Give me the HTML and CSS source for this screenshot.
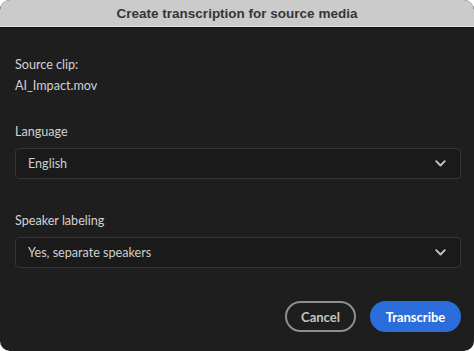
FILE: index.html
```html
<!DOCTYPE html>
<html>
<head>
<meta charset="utf-8">
<link rel="stylesheet" href="styles.css">
</head>
<body>
<div class="window">
  <div class="titlebar">Create transcription for source media</div>
  <div class="content">
    <div class="clip">
      <div class="line">Source clip:</div>
      <div class="line">AI_Impact.mov</div>
    </div>
    <div class="field">
      <div class="label">Language</div>
      <div class="select">
        <span class="value">English</span>
        <svg class="chev" width="11" height="7" viewBox="0 0 11 7"><path d="M1.2 1.2 L5.5 5.5 L9.8 1.2" fill="none" stroke="#c4c4c4" stroke-width="1.9" stroke-linecap="round" stroke-linejoin="round"/></svg>
      </div>
    </div>
    <div class="field second">
      <div class="label">Speaker labeling</div>
      <div class="select">
        <span class="value">Yes, separate speakers</span>
        <svg class="chev" width="11" height="7" viewBox="0 0 11 7"><path d="M1.2 1.2 L5.5 5.5 L9.8 1.2" fill="none" stroke="#c4c4c4" stroke-width="1.9" stroke-linecap="round" stroke-linejoin="round"/></svg>
      </div>
    </div>
    <div class="actions">
      <button class="btn cancel">Cancel</button>
      <button class="btn primary">Transcribe</button>
    </div>
  </div>
</div>
</body>
</html>
```
FILE: styles.css
```css
html, body {
  margin: 0;
  padding: 0;
  background: #ffffff;
}
.window {
  width: 474px;
  height: 351px;
  border-radius: 10px;
  overflow: hidden;
  background: #1e1e1e;
  display: flex;
  flex-direction: column;
}
.titlebar {
  height: 26px;
  background: #cbcbcb;
  border-bottom: 1px solid #e2e2e2;
  box-shadow: 0 1px 0 #111;
  color: #363636;
  font-family: "Liberation Sans", Arial, sans-serif;
  font-weight: bold;
  font-size: 13.5px;
  line-height: 27px;
  text-align: center;
}
.content {
  padding: 27px 13px 0 15px;
  font-family: Lato, "Open Sans", sans-serif;
  font-size: 12.6px;
  color: #d2d2d2;
}
.line {
  line-height: 21px;
}
.clip {
  margin-bottom: 25px;
}
.label {
  line-height: 21px;
  margin-bottom: 6px;
}
.field.second {
  margin-top: 31px;
}
.select {
  height: 29px;
  border: 1px solid #353535;
  border-radius: 4px;
  background: #1a1a1a;
  display: flex;
  align-items: center;
  justify-content: space-between;
  padding: 0 14px 0 12px;
  color: #cfcfcf;
}
.chev {
  display: block;
}
.actions {
  margin-top: 33px;
  display: flex;
  justify-content: flex-end;
  gap: 14px;
}
.btn {
  height: 31px;
  border-radius: 16px;
  font-family: Lato, "Open Sans", sans-serif;
  font-weight: bold;
  font-size: 13px;
  padding: 0;
  cursor: pointer;
}
.cancel {
  width: 71px;
  background: transparent;
  border: 2px solid #8e8e8e;
  color: #c4c4c4;
}
.primary {
  width: 91px;
  background: #2b6ddb;
  border: none;
  color: #ffffff;
}
```
